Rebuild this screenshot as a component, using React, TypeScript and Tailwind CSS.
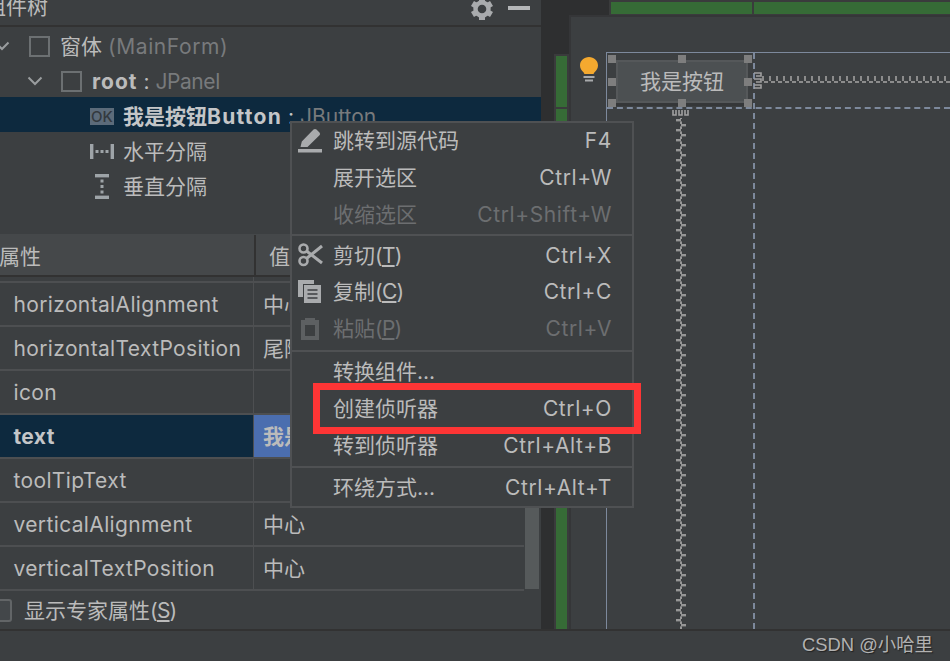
import React from "react";

const FONT = "font-['Inter','Noto_Sans_CJK_SC',sans-serif]";

function Chevron() {
  return (
    <svg width="16" height="10" viewBox="0 0 16 10" className="shrink-0">
      <polyline points="1.5,1.5 8,8 14.5,1.5" fill="none" stroke="#9a9d9f" strokeWidth="2" />
    </svg>
  );
}

function BoxIcon() {
  return <span className="block w-[21px] h-[21px] border-2 border-[#6c7072] shrink-0" />;
}

function TreeRow({ indent, selected, icon, children }: { indent: string; selected?: boolean; icon?: React.ReactNode; children: React.ReactNode }) {
  return (
    <div className={`h-[35px] pt-[3px] flex items-center whitespace-nowrap overflow-hidden ${indent} ${selected ? "bg-[#0d293e]" : ""}`}>
      {icon}
      {children}
    </div>
  );
}

function PropRow({ name, value, selected, blue }: { name: string; value?: string; selected?: boolean; blue?: boolean }) {
  return (
    <div className={`h-[44px] flex border-b-2 border-[#4d4f51] ${selected ? "bg-[#0d293e]" : ""}`}>
      <div className={`w-[254px] pl-[13.5px] flex items-center border-r border-[#4d4f51] shrink-0 tracking-[0.36px] ${selected ? "font-bold text-[#c4c6c8]" : ""}`}>{name}</div>
      <div className={`flex-1 flex items-center pl-[9px] ${blue ? "bg-[#4b6eaf] font-bold" : ""}`}>{value}</div>
    </div>
  );
}

function MenuRow({ label, shortcut, icon, disabled, h, u }: { label: string; shortcut?: string; icon?: React.ReactNode; disabled?: boolean; h: string; u?: string }) {
  return (
    <div className={`${h} flex items-center pr-[20px] ${disabled ? "text-[#6c6e70]" : "text-[#bbbbbb]"}`}>
      <span className="w-[41px] pl-[6px] shrink-0 flex items-center justify-start">{icon}</span>
      <span className="flex-1 whitespace-nowrap">
        {label}
        {u && (
          <span className="tracking-[-0.8px]">
            (<span className="underline underline-offset-2">{u}</span>)
          </span>
        )}
      </span>
      <span className="whitespace-nowrap tracking-[0.6px]">{shortcut}</span>
    </div>
  );
}

function Pencil() {
  return (
    <svg width="24" height="25" viewBox="0 0 24 25">
      <path d="M2.5 19 L3.8 13.6 L15.5 1.6 Q17 0.2 18.5 1.6 L21.5 4.4 Q22.8 5.8 21.5 7.2 L9.5 19 Z" fill="#a9abad" />
      <rect x="0" y="21" width="24" height="3.5" fill="#a9abad" />
    </svg>
  );
}

function Scissors() {
  return (
    <svg width="25" height="26" viewBox="0 0 25 26" fill="none" stroke="#a9abad">
      <circle cx="5.5" cy="6.5" r="4" strokeWidth="2.6" />
      <circle cx="5.5" cy="19" r="4" strokeWidth="2.6" />
      <path d="M8.5 9 L24 21" strokeWidth="3" />
      <path d="M8.5 16.5 L24 4" strokeWidth="3" />
    </svg>
  );
}

function CopyIcon() {
  return (
    <svg width="24" height="24" viewBox="0 0 24 24">
      <path d="M0 0 H16 V4 H5 V17 H0 Z" fill="#a9abad" />
      <rect x="6" y="5" width="17" height="18" fill="#a9abad" />
      <path d="M9.5 10 H19.5 M9.5 14 H19.5 M9.5 18 H19.5" stroke="#3c3f41" strokeWidth="1.6" />
    </svg>
  );
}

function ClipIcon() {
  return (
    <svg width="24" height="24" viewBox="0 0 24 24">
      <path d="M3 4 H7 V2 H17 V4 H21 V24 H3 Z M7 9 V20 H17 V9 Z" fill="#5d6062" fillRule="evenodd" />
    </svg>
  );
}

function Gear() {
  return (
    <svg width="22" height="22" viewBox="0 0 22 22" fill="#a9abad">
      {[0, 60, 120, 180, 240, 300].map((a) => (
        <rect key={a} x="8" y="0" width="6" height="6" transform={`rotate(${a} 11 11)`} />
      ))}
      <circle cx="11" cy="11" r="6.5" fill="none" stroke="#a9abad" strokeWidth="4.4" />
    </svg>
  );
}

function Handle({ pos }: { pos: string }) {
  return <span className={`absolute w-[8px] h-[8px] bg-[#7e7e7e] ${pos}`} />;
}

export default function App() {
  return (
    <div className={`relative w-[950px] h-[661px] overflow-hidden bg-[#3c3f41] text-[#bbbbbb] text-[21px] leading-none flex flex-col ${FONT}`}>
      <div className="h-[629px] flex shrink-0">
        {/* left panel */}
        <div className="w-[541px] shrink-0 flex flex-col">
          <div className="h-[25px] flex items-center overflow-hidden shrink-0">
            <span className="ml-[-15px] mt-[-13px] text-[21px] text-[#bbbbbb] whitespace-nowrap">组件树</span>
            <span className="ml-auto mr-[15px] mt-[-8px]"><Gear /></span>
            <span className="w-[22px] h-[4px] bg-[#b4b6b8] mr-[11px] mt-[-9px]" />
          </div>
          <div className="h-[2px] bg-[#323232] shrink-0" />
          <div className="h-[207px] shrink-0">
            <TreeRow indent="pl-0" icon={<span className="ml-[-6px] mr-[19px]"><Chevron /></span>}>
              <BoxIcon />
              <span className="ml-[10px]">窗体 <span className="text-[#787a7c] tracking-[0.6px]">(MainForm)</span></span>
            </TreeRow>
            <TreeRow indent="pl-[27px]" icon={<span className="mr-[18px]"><Chevron /></span>}>
              <BoxIcon />
              <span className="ml-[10px]"><b className="text-[#bbbbbb] tracking-[1px]">root</b> : <span className="text-[#787a7c] tracking-[-0.4px]">JPanel</span></span>
            </TreeRow>
            <TreeRow indent="pl-[90px]" selected icon={
              <span className="w-[24px] h-[17px] bg-[#5c6b7a] mr-[9px] text-[#33393f] text-[15px] font-medium flex items-center justify-center shrink-0">OK</span>
            }>
              <span className="font-bold text-[#c4c6c8]">我是按钮<span className="tracking-[1.3px]">Button</span></span>
              <span className="text-[#c4c6c8]">&nbsp;:&nbsp;</span>
              <span className="text-[#787a7c]">JButton</span>
            </TreeRow>
            <TreeRow indent="pl-[90px]" icon={
              <svg width="24" height="15" viewBox="0 0 24 15" className="mr-[9px] shrink-0" fill="#9ea4a8">
                <rect x="0" y="0" width="3.4" height="15" />
                <rect x="20.6" y="0" width="3.4" height="15" />
                <rect x="5.5" y="6" width="3" height="3" />
                <rect x="10.5" y="6" width="3" height="3" />
                <rect x="15.5" y="6" width="3" height="3" />
              </svg>
            }>
              水平分隔
            </TreeRow>
            <TreeRow indent="pl-[95px]" icon={
              <svg width="14" height="25" viewBox="0 0 14 25" className="mr-[14px] shrink-0" fill="#9ea4a8">
                <rect x="0" y="0" width="14" height="3.4" />
                <rect x="0" y="21.6" width="14" height="3.4" />
                <rect x="5.5" y="5.5" width="3" height="3" />
                <rect x="5.5" y="11" width="3" height="3" />
                <rect x="5.5" y="16.5" width="3" height="3" />
              </svg>
            }>
              垂直分隔
            </TreeRow>
          </div>

          {/* property table */}
          <div className="flex flex-1 min-h-0">
            <div className="w-[524px] shrink-0 flex flex-col">
              <div className="h-[43px] pt-[3px] bg-[#45484a] border-b-2 border-[#323232] flex items-center shrink-0">
                <span className="w-[257px] ml-[-1px] mt-[-3px] pt-[3px] h-[40px] flex items-center border-r-2 border-[#323232]">属性</span>
                <span className="ml-[13px]">值</span>
              </div>
              <div className="h-[6px] flex border-b-2 border-[#4d4f51] shrink-0">
                <span className="w-[254px] border-r border-[#4d4f51]" />
              </div>
              <PropRow name="horizontalAlignment" value="中心" />
              <PropRow name="horizontalTextPosition" value="尾随" />
              <PropRow name="icon" />
              <PropRow name="text" value="我是按钮" selected blue />
              <PropRow name="toolTipText" />
              <PropRow name="verticalAlignment" value="中心" />
              <PropRow name="verticalTextPosition" value="中心" />
              <div className="flex-1 flex items-center">
                <span className="w-[18px] h-[23px] ml-[-6px] mr-[12px] rounded-[3px] border-2 border-[#626567] bg-[#43474a] shrink-0" />
                <span>显示专家属性<span className="tracking-[-0.8px]">(<span className="underline underline-offset-2">S</span>)</span></span>
              </div>
            </div>
            <div className="flex-1 flex justify-center">
              <div className="w-[14px] h-[310px] mt-[45px] bg-[#565a5b] mr-[1px]" />
            </div>
          </div>
        </div>

        {/* dark gutter */}
        <div className="w-[13px] bg-[#2e2f30] shrink-0" />

        {/* right */}
        <div className="flex-1 flex flex-col bg-[#2e2f30] min-w-0">
          <div className="h-[15px] flex shrink-0 pl-[55px]">
            <div className="w-full h-full bg-[#3a3b3c] flex pl-[2px] pt-[2px] gap-[2px]">
              <span className="w-[141px] h-[12px] bg-[#366b36]" />
              <span className="flex-1 h-[12px] bg-[#366b36]" />
            </div>
          </div>
          <div className="flex-1 flex min-h-0">
            <div className="w-[15px] shrink-0 flex flex-col pt-[39px]">
              <div className="flex-1 border-2 border-[#3a3b3c] border-b-0 flex flex-col gap-[2px] bg-[#3a3b3c]">
                <span className="h-[51px] bg-[#366b36] shrink-0" />
                <span className="flex-1 bg-[#366b36]" />
              </div>
            </div>
            {/* designer canvas */}
            <div className="relative flex-1 border-l-2 border-t-2 border-[#353638] bg-[#3c3f41]">
              <svg className="absolute left-[9px] top-[40px]" width="18" height="25" viewBox="0 0 18 25">
                <path d="M9 0 C14 0 18 3.7 18 8.4 C18 11.5 16.4 13.4 14.8 15 C14 15.9 13.8 16.5 13.6 17 H4.4 C4.2 16.5 4 15.9 3.2 15 C1.6 13.4 0 11.5 0 8.4 C0 3.7 4 0 9 0 Z" fill="#f4a92f" />
                <rect x="3.5" y="19" width="11" height="2" fill="#a8aaac" />
                <rect x="5" y="22.5" width="8" height="2" fill="#a8aaac" />
              </svg>
              {/* form outline */}
              <div className="absolute left-[35px] top-[35px] right-0 bottom-0 border-l border-t border-[#7d899c]" />
              <div className="absolute left-[36px] right-0 top-[90px] h-0 border-t-2 border-dashed border-[#7d899c]" />
              <div className="absolute left-[182px] top-[36px] bottom-0 w-0 border-l-2 border-dashed border-[#7d899c]" />
              {/* button */}
              <div className="absolute left-[45px] top-[43px] w-[132px] h-[43px] bg-[#4c5052] border-2 border-[#55585a] shadow-[0_3px_0_#353739] flex items-center justify-center text-[21px] text-[#bbbbbb]">
                我是按钮
              </div>
              <Handle pos="left-[37px] top-[38px]" />
              <Handle pos="left-[107px] top-[38px]" />
              <Handle pos="left-[173px] top-[38px]" />
              <Handle pos="left-[37px] top-[61px]" />
              <Handle pos="left-[173px] top-[61px]" />
              <Handle pos="left-[37px] top-[82px]" />
              <Handle pos="left-[107px] top-[82px]" />
              <Handle pos="left-[173px] top-[82px]" />
              {/* spring horizontal */}
              <svg className="absolute left-[183px] top-[54px]" width="197" height="20" viewBox="0 0 197 20">
                <defs>
                  <pattern id="hs" x="8" width="7" height="14" patternUnits="userSpaceOnUse">
                    <rect x="0" y="5" width="2" height="5" fill="#8c8c8c" />
                    <rect x="2" y="10" width="4" height="2" fill="#8c8c8c" />
                  </pattern>
                </defs>
                <rect x="8" y="0" width="189" height="14" fill="url(#hs)" />
                <path d="M0 2 H7 V5 H2 M0 8 H7 V11 H2 M0 14 H7 V17 H0" fill="none" stroke="#a0a0a0" strokeWidth="1.6" />
              </svg>
              {/* spring vertical */}
              <svg className="absolute left-[101px] top-[92px]" width="20" height="520" viewBox="0 0 20 520">
                <defs>
                  <pattern id="vs" x="4" width="10" height="10" patternUnits="userSpaceOnUse">
                    <rect x="0" y="0" width="5" height="2.4" fill="#969696" />
                    <rect x="4" y="2.4" width="2" height="2.6" fill="#969696" />
                    <rect x="5" y="5" width="5" height="2.4" fill="#969696" />
                    <rect x="4" y="7.4" width="2" height="2.6" fill="#969696" />
                  </pattern>
                </defs>
                <rect x="4" y="9" width="10" height="511" fill="url(#vs)" />
                <path d="M1 1 V6 H4 V1 M7 1 V6 H10 V1 M13 1 V6 H16 V1" fill="none" stroke="#a0a0a0" strokeWidth="1.6" />
              </svg>
            </div>
          </div>
        </div>
      </div>

      {/* status */}
      <div className="flex-1 border-t-2 border-[#323232] flex items-center justify-end pr-[17px] pb-[2px]">
        <span className="text-[18.4px] text-[#b2b2b2] font-['Liberation_Sans','Noto_Sans_CJK_SC',sans-serif] [text-shadow:1px_1px_1px_#222]">CSDN @小哈里</span>
      </div>

      {/* context menu */}
      <div className="absolute left-[290px] top-[121px] w-[344px] bg-[#3c3f41] border-2 border-[#4f5153]">
        <MenuRow h="h-[37px] pb-[2px]" label="跳转到源代码" shortcut="F4" icon={<Pencil />} />
        <MenuRow h="h-[37px] pb-[2px]" label="展开选区" shortcut="Ctrl+W" />
        <MenuRow h="h-[37px] pb-[2px]" label="收缩选区" shortcut="Ctrl+Shift+W" disabled />
        <div className="h-[2px] bg-[#4f5153] mb-[2px]" />
        <MenuRow h="h-[36.5px] pb-[2px]" label="剪切" u="T" shortcut="Ctrl+X" icon={<Scissors />} />
        <MenuRow h="h-[36.5px] pb-[2px]" label="复制" u="C" shortcut="Ctrl+C" icon={<CopyIcon />} />
        <MenuRow h="h-[36.5px] pb-[2px]" label="粘贴" u="P" shortcut="Ctrl+V" icon={<ClipIcon />} disabled />
        <div className="h-[2px] bg-[#4f5153] mt-[2px] mb-[2px]" />
        <MenuRow h="h-[37px] pb-[2px]" label="转换组件..." />
        <MenuRow h="h-[37px] pb-[2px]" label="创建侦听器" shortcut="Ctrl+O" />
        <MenuRow h="h-[37px] pb-[2px]" label="转到侦听器" shortcut="Ctrl+Alt+B" />
        <div className="h-[2px] bg-[#4f5153] mt-[1px] mb-[2px]" />
        <MenuRow h="h-[36px]" label="环绕方式..." shortcut="Ctrl+Alt+T" />
      </div>

      {/* red annotation */}
      <div className="absolute left-[313px] top-[383px] w-[328px] h-[51px] border-[7px] border-[#fe3535] pointer-events-none" />
    </div>
  );
}
